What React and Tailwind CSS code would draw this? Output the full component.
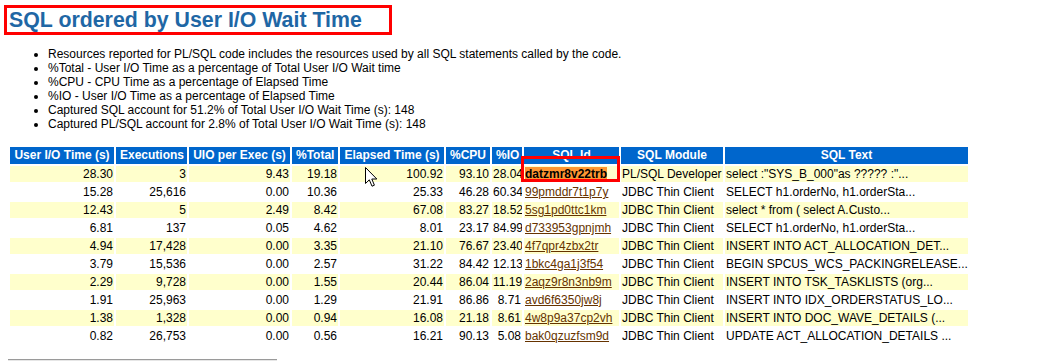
import React from "react";

const rows = [
  ["28.30", "3", "9.43", "19.18", "100.92", "93.10", "28.04", "datzmr8v22trb", "PL/SQL Developer", 'select :"SYS_B_000"as ????? :"...'],
  ["15.28", "25,616", "0.00", "10.36", "25.33", "46.28", "60.34", "99pmddr7t1p7y", "JDBC Thin Client", "SELECT h1.orderNo, h1.orderSta..."],
  ["12.43", "5", "2.49", "8.42", "67.08", "83.27", "18.52", "5sg1pd0ttc1km", "JDBC Thin Client", "select * from ( select A.Custo..."],
  ["6.81", "137", "0.05", "4.62", "8.01", "23.17", "84.99", "d733953gpnjmh", "JDBC Thin Client", "SELECT h1.orderNo, h1.orderSta..."],
  ["4.94", "17,428", "0.00", "3.35", "21.10", "76.67", "23.40", "4f7qpr4zbx2tr", "JDBC Thin Client", "INSERT INTO ACT_ALLOCATION_DET..."],
  ["3.79", "15,536", "0.00", "2.57", "31.22", "84.42", "12.13", "1bkc4ga1j3f54", "JDBC Thin Client", "BEGIN SPCUS_WCS_PACKINGRELEASE..."],
  ["2.29", "9,728", "0.00", "1.55", "20.44", "86.04", "11.19", "2aqz9r8n3nb9m", "JDBC Thin Client", "INSERT INTO TSK_TASKLISTS (org..."],
  ["1.91", "25,963", "0.00", "1.29", "21.91", "86.86", "8.71", "avd6f6350jw8j", "JDBC Thin Client", "INSERT INTO IDX_ORDERSTATUS_LO..."],
  ["1.38", "1,328", "0.00", "0.94", "16.08", "21.18", "8.61", "4w8p9a37cp2vh", "JDBC Thin Client", "INSERT INTO DOC_WAVE_DETAILS (..."],
  ["0.82", "26,753", "0.00", "0.56", "16.21", "90.13", "5.08", "bak0qzuzfsm9d", "JDBC Thin Client", "UPDATE ACT_ALLOCATION_DETAILS ..."],
];

const bullets = [
  "Resources reported for PL/SQL code includes the resources used by all SQL statements called by the code.",
  "%Total - User I/O Time as a percentage of Total User I/O Wait time",
  "%CPU - CPU Time as a percentage of Elapsed Time",
  "%IO - User I/O Time as a percentage of Elapsed Time",
  "Captured SQL account for 51.2% of Total User I/O Wait Time (s): 148",
  "Captured PL/SQL account for 2.8% of Total User I/O Wait Time (s): 148",
];

const th = "bg-[#0066CC] text-white font-bold text-center px-[4px] pt-[1px] pb-[2px] leading-[14px] whitespace-nowrap overflow-hidden";

export default function App() {
  return (
    <div
      className="relative w-[1063px] h-[364px] overflow-hidden bg-white text-black pl-[8px] pt-[5px]"
      style={{ fontFamily: '"Liberation Sans", Arial, sans-serif' }}
    >
      <div className="ml-[-4px] w-[388px] h-[30px] border-[3px] border-[#ff0000] pl-[2px]">
        <span className="block text-[21.33px] leading-[24px] font-bold text-[#1f67a5] whitespace-nowrap">
          SQL ordered by User I/O Wait Time
        </span>
      </div>

      <ul className="mt-[11.5px] pl-[40px] list-disc text-[12px] leading-[14px]">
        {bullets.map((b) => (
          <li key={b} className="whitespace-nowrap">{b}</li>
        ))}
      </ul>

      <table className="mt-[14.5px] border-separate border-spacing-[2px] table-fixed w-[962px] text-[12px]">
        <thead>
          <tr>
            <th className={`${th} w-[104px]`}>User I/O Time (s)</th>
            <th className={`${th} w-[71px]`}>Executions</th>
            <th className={`${th} w-[101px]`}>UIO per Exec (s)</th>
            <th className={`${th} w-[46px]`}>%Total</th>
            <th className={`${th} w-[104px]`}>Elapsed Time (s)</th>
            <th className={`${th} w-[44px]`}>%CPU</th>
            <th className={`${th} w-[30px]`}>%IO</th>
            <th className={`${th} w-[95px]`}>SQL Id</th>
            <th className={`${th} w-[102px]`}>SQL Module</th>
            <th className={`${th} w-[243px]`}>SQL Text</th>
          </tr>
        </thead>
        <tbody>
          {rows.map((r, i) => {
            const bg = i % 2 === 0 ? "bg-[#FFFFCC]" : "bg-white";
            const td = `${bg} p-[1px] leading-[14px] whitespace-nowrap overflow-hidden align-top`;
            return (
              <tr key={i}>
                {r.slice(0, 7).map((c, j) => (
                  <td key={j} className={`${td} text-right`}>{c}</td>
                ))}
                <td className={`${td} text-left`}>
                  {i === 0 ? (
                    <a className="text-black underline font-bold bg-[#ff9632]">{r[7]}</a>
                  ) : (
                    <a className="text-[#663300] underline">{r[7]}</a>
                  )}
                </td>
                <td className={`${td} text-left`}>{r[8]}</td>
                <td className={`${td} text-left`}>{r[9]}</td>
              </tr>
            );
          })}
        </tbody>
      </table>

      <div className="mt-[13px] w-[269px] h-[2px] border-t border-t-[#9a9a9a] border-b border-b-[#e6e6e6]"></div>

      <div className="absolute left-[521px] top-[156px] w-[99px] h-[26px] border-[3px] border-[#ff0000] pointer-events-none"></div>

      <svg className="absolute left-[365px] top-[167px]" width="13" height="21" viewBox="0 0 13 21">
        <path d="M0.5 0.5 L0.5 16.5 L4.3 12.8 L7 19.2 L9.4 18.2 L6.8 12 L11.8 12 Z" fill="#fff" stroke="#000" strokeWidth="1" strokeLinejoin="miter" />
      </svg>
    </div>
  );
}
